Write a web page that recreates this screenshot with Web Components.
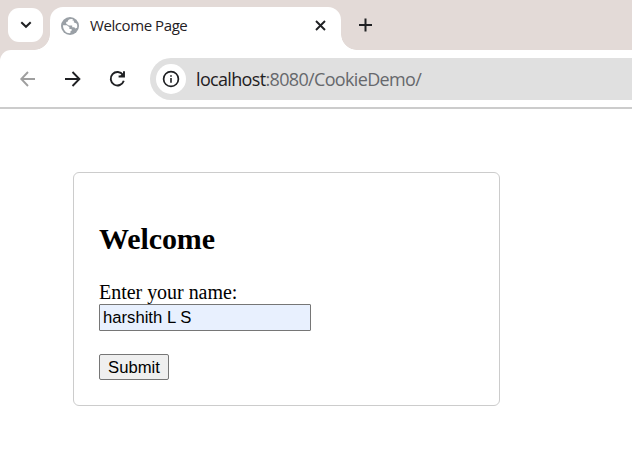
<!DOCTYPE html>
<html lang="en">
<head>
<meta charset="utf-8">
<title>Welcome Page</title>
<style>
body { margin: 0; background: #fff; overflow: hidden; }
</style>
</head>
<body>
<browser-window>
  <tab-strip slot="tabs"><browser-tab>Welcome Page</browser-tab></tab-strip>
  <tool-bar slot="toolbar"><address-bar><span slot="host">localhost</span>:8080/CookieDemo/</address-bar></tool-bar>
  <welcome-card>
    <span slot="title">Welcome</span>
    <name-form label="Enter your name:" value="harshith L S" action="Submit"></name-form>
  </welcome-card>
</browser-window>
<script>
function define(name, html, setup) {
  customElements.define(name, class extends HTMLElement {
    constructor() {
      super();
      this.attachShadow({ mode: 'open' }).innerHTML = html;
    }
    connectedCallback() {
      if (setup) setup(this, this.shadowRoot);
    }
  });
}

define('browser-window', `
<style>
:host { display: flex; flex-direction: column; width: 632px; height: 457px; overflow: hidden; background: #fff; }
.chrome { background: #e3dad7; flex: none; }
main { padding: 63px 0 0 73px; }
</style>
<div class="chrome"><slot name="tabs"></slot><slot name="toolbar"></slot></div>
<main><slot></slot></main>`);

define('tab-strip', `
<style>
:host { display: flex; height: 50px; }
.search { width: 35px; height: 34px; margin: 8px 7px 0 8px; border-radius: 11px; background: #fff; display: grid; place-items: center; flex: none; }
.add { margin: 18px 0 0 18px; }
svg { display: block; }
</style>
<div class="search"><svg width="12" height="8" viewBox="0 0 12 8" fill="none" stroke="#1f2023" stroke-width="2"><path d="M1.3 1.2 6 5.8l4.700-4.600"/></svg></div>
<slot></slot>
<svg class="add" width="14" height="14" viewBox="0 0 14 14" stroke="#1f2023" stroke-width="2"><path d="M0 7h13M6.500 .5v13"/></svg>`);

define('browser-tab', `
<style>
:host { display: flex; align-items: center; box-sizing: border-box; position: relative; width: 291px; height: 43px; margin-top: 7px; padding: 0 15px 6px 11px; border-radius: 13px 13px 0 0; background: #fff; font: 15px/20px "Open Sans", sans-serif; color: #1f2023; }
:host::before, :host::after { content: ""; position: absolute; bottom: 0; width: 16px; height: 16px; }
:host::before { right: 100%; background: radial-gradient(circle at 0 0, transparent 15.5px, #fff 16.2px); }
:host::after { left: 100%; background: radial-gradient(circle at 100% 0, transparent 15.5px, #fff 16.2px); }
.title { margin: -2px 0 0 11px; flex: 1; white-space: nowrap; letter-spacing: -.42px; }
svg { flex: none; }
</style>
<svg width="18" height="18" viewBox="0 0 18 18"><circle cx="9" cy="9" r="9" fill="#9aa0a6"/><path fill="#fff" d="M10.200 2C8 2 6.800 3 6.900 4.600L5.200 5v1.700L7.800 8.600h3.400v1.700h2.200l.7 1.300 2-.9c.7-3.200-.6-5-2-4.800l-1.300-.6.200-1.600-1.600-.3.600-1.100zM2 8.200l3.900.1 2.500 2v1.700h2.200v1.700l-1.300.9.200 1.500C5.500 16.700 2 13.300 2 8.200z"/></svg>
<span class="title"><slot></slot></span>
<svg width="11" height="11" viewBox="0 0 11 11" stroke="#1f2023" stroke-width="1.9"><path d="m1 1 9 9M10 1l-9 9"/></svg>`);

define('tool-bar', `
<style>
:host { display: flex; align-items: center; box-sizing: border-box; height: 59px; padding: 0 0 0 19px; background: #fff; border-bottom: 2px solid #ccc; border-radius: 11px 0 0 0; }
svg { display: block; margin-right: 27px; flex: none; fill: none; stroke: #1f2023; stroke-width: 1.9; }
.back { stroke: #9f9f9f; }
.reload { margin-right: 23px; }
</style>
<svg class="back" width="18" height="18" viewBox="0 0 18 18"><path d="M16 9H2.500M9 2 2.300 9 9 16"/></svg>
<svg width="18" height="18" viewBox="0 0 18 18"><path d="M1 9h14.200M8.500 2l6.900 7-6.900 7"/></svg>
<svg class="reload" width="18" height="18" viewBox="0 0 18 18"><path d="M14 5A6.700 6.700 0 1 0 14.800 10.800M15 1.300v5.200H9.600"/><path d="M10.500 6.500 15 2.300v4.200z" fill="#1f2023" stroke="none"/></svg>
<slot></slot>`);

define('address-bar', `
<style>
:host { display: flex; align-items: center; box-sizing: border-box; flex: 1; height: 42px; padding-left: 6px; margin-top: 1px; border-radius: 21px 0 0 21px; background: #e0e0e0; font: 400 18px/26px "Open Sans", sans-serif; color: #66686c; }
.info { display: grid; place-items: center; width: 30px; height: 30px; border-radius: 50%; background: #fff; flex: none; }
.url { margin-left: 10px; white-space: nowrap; letter-spacing: -.66px; }
::slotted(span) { color: #1f2023; }
</style>
<div class="info"><svg width="18" height="18" viewBox="0 0 18 18"><circle cx="9" cy="9" r="7.400" fill="none" stroke="#1f2023" stroke-width="1.700"/><path d="M8.200 8h1.600v4.700H8.200zM8.200 5.200h1.600v1.600H8.200z" fill="#1f2023"/></svg></div>
<div class="url"><slot name="host"></slot><slot></slot></div>`);

define('welcome-card', `
<style>
:host { display: block; box-sizing: border-box; width: 427px; height: 234px; padding: 48px 25px 25px; border: 1px solid #ccc; border-radius: 6px; font: 20px/23px "Liberation Serif", serif; color: #000; }
h2 { margin: 0 0 25px; font-size: 30px; line-height: 35px; font-weight: bold; letter-spacing: -.1px; }
</style>
<h2><slot name="title"></slot></h2><slot></slot>`);

define('name-form', `
<style>
:host { display: block; }
form { display: flex; flex-direction: column; align-items: flex-start; }
label { letter-spacing: -.03px; }
input, button { box-sizing: border-box; font: 16.667px/19px "Liberation Sans", sans-serif; color: #000; margin: 0; border: 1px solid #767676; border-radius: 1px; }
input { width: 212px; height: 27px; padding: 1px 3px; background: #e8f0fe; outline: none; }
button { width: 70px; height: 26px; margin-top: 23px; padding: 0; background: #efefef; border-radius: 2px; }
</style>
<form><label for="name"></label><input id="name"><button type="button"></button></form>`,
(host, root) => {
  root.querySelector('label').textContent = host.getAttribute('label');
  root.querySelector('input').value = host.getAttribute('value');
  root.querySelector('button').textContent = host.getAttribute('action');
});
</script>
</body>
</html>
